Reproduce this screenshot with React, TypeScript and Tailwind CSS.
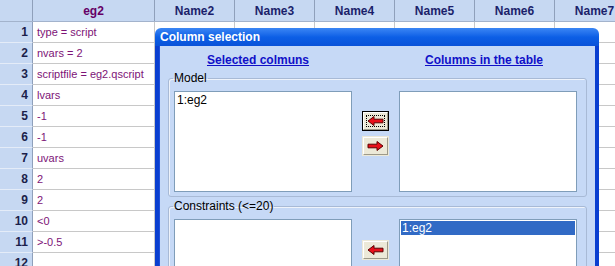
import React from "react";

const cols = ["Name2", "Name3", "Name4", "Name5", "Name6", "Name7"];
const cells = [
  "type = script",
  "nvars = 2",
  "scriptfile = eg2.qscript",
  "lvars",
  "-1",
  "-1",
  "uvars",
  "2",
  "2",
  "<0",
  ">-0.5",
  "",
];

function Arrow({ dir }: { dir: "left" | "right" }) {
  const pts =
    dir === "left"
      ? "1,5 7,0.5 7,3.2 16,3.2 16,6.8 7,6.8 7,9.5"
      : "16,5 10,0.5 10,3.2 1,3.2 1,6.8 10,6.8 10,9.5";
  return (
    <svg width="17" height="10" viewBox="0 0 17 10">
      <polygon points={pts} fill="#e8101a" stroke="#5a0000" strokeWidth="1" strokeLinejoin="miter" />
    </svg>
  );
}

function XpButton({ dir, isDefault }: { dir: "left" | "right"; isDefault?: boolean }) {
  return (
    <div
      className={
        "w-[27px] h-[20px] bg-[#ece9d8] " +
        (isDefault ? "border border-black" : "border border-transparent")
      }
    >
      <div className="w-full h-full border-t border-l border-t-white border-l-white border-b border-r border-b-[#9d9a8a] border-r-[#9d9a8a] flex items-center justify-center relative">
        {isDefault && (
          <div className="absolute inset-[2px] border border-dotted border-black" />
        )}
        <Arrow dir={dir} />
      </div>
    </div>
  );
}

function ListBox({ items, selected }: { items: string[]; selected?: boolean }) {
  return (
    <div className="w-[178px] h-[101px] bg-white border border-[#7f9db9] p-[1px]">
      {items.map((it) => (
        <div
          key={it}
          className={
            "h-[14px] leading-[14px] px-[1px] text-[12px] " +
            (selected ? "bg-[#316ac5] text-white" : "text-black")
          }
        >
          {it}
        </div>
      ))}
    </div>
  );
}

export default function App() {
  return (
    <div
      className="relative w-[615px] h-[266px] overflow-hidden bg-white"
      style={{ fontFamily: '"Liberation Sans", Arial, sans-serif' }}
    >
      {/* Grid */}
      <div className="flex flex-col">
        <div className="flex h-[22px] bg-[#c6d8f2] border-b border-[#a3b3cc]">
          <div className="w-[33px] shrink-0 border-r border-[#8fa0bb]" />
          <div className="w-[122px] shrink-0 border-r border-[#8fa0bb] flex items-center justify-center text-[12px] font-bold text-[#660066]">
            eg2
          </div>
          {cols.map((c) => (
            <div
              key={c}
              className="w-[80px] shrink-0 border-r border-[#8fa0bb] flex items-center justify-center text-[12px] font-bold text-[#1b1f6b]"
            >
              {c}
            </div>
          ))}
        </div>
        {cells.map((t, i) => (
          <div key={i} className="flex h-[21px] shrink-0">
            <div className="w-[33px] shrink-0 bg-[#c6d8f2] border-r border-[#8fa0bb] border-b border-b-[#e4ecf8] flex items-center justify-end pr-[4px] text-[12px] font-bold text-[#1b1f4b]">
              {i + 1}
            </div>
            <div className="w-[122px] shrink-0 border-r border-b border-[#c8c8c8] flex items-center pl-[4px] text-[11px] text-[#7d1377] whitespace-nowrap">
              {t}
            </div>
            {cols.map((c) => (
              <div key={c} className="w-[80px] shrink-0 border-r border-b border-[#c8c8c8]" />
            ))}
          </div>
        ))}
      </div>

      {/* Dialog window */}
      <div className="absolute left-[155px] top-[28px] w-[444px] h-[260px] flex flex-col">
        <div className="h-[20px] rounded-t-[6px] bg-gradient-to-b from-[#3a86f4] via-[#0c5fe6] to-[#0a52d8] flex items-center pl-[5px] text-white text-[12px] font-bold">
          Column selection
        </div>
        <div className="flex-1 bg-[#0a3fd0] px-[4px] flex">
          <div className="flex-1 bg-[#c6d9f6] border-l border-[#1e4fd8] flex flex-col pl-[8px] pr-[8px]">
            <div className="flex h-[15px] mt-[5px] text-[12px] font-bold text-[#1010c8] underline">
              <div className="w-[180px] text-center">Selected colmuns</div>
              <div className="w-[46px]" />
              <div className="w-[180px] text-center">Columns in the table</div>
            </div>

            <fieldset className="mt-[5px] border border-[#a8bad6] rounded-[3px] pl-[5px] pr-[7px] pt-[6px] pb-[4px] shadow-[inset_1px_1px_0_#eef3fb]">
              <legend className="text-[12px] leading-[14px] text-black px-[1px] ml-[-1px]">Model</legend>
              <div className="flex">
                <ListBox items={["1:eg2"]} />
                <div className="w-[47px] flex flex-col items-center pt-[20px] gap-[5px]">
                  <XpButton dir="left" isDefault />
                  <XpButton dir="right" />
                </div>
                <ListBox items={[]} />
              </div>
            </fieldset>

            <fieldset className="mt-[2px] border border-[#a8bad6] rounded-[3px] pl-[5px] pr-[7px] pt-[6px] pb-[4px] shadow-[inset_1px_1px_0_#eef3fb]">
              <legend className="text-[12px] leading-[14px] text-black px-[1px] ml-[-1px]">Constraints (&lt;=20)</legend>
              <div className="flex">
                <ListBox items={[]} />
                <div className="w-[47px] flex flex-col items-center pt-[21px]">
                  <XpButton dir="left" />
                </div>
                <ListBox items={["1:eg2"]} selected />
              </div>
            </fieldset>
          </div>
        </div>
      </div>
    </div>
  );
}
